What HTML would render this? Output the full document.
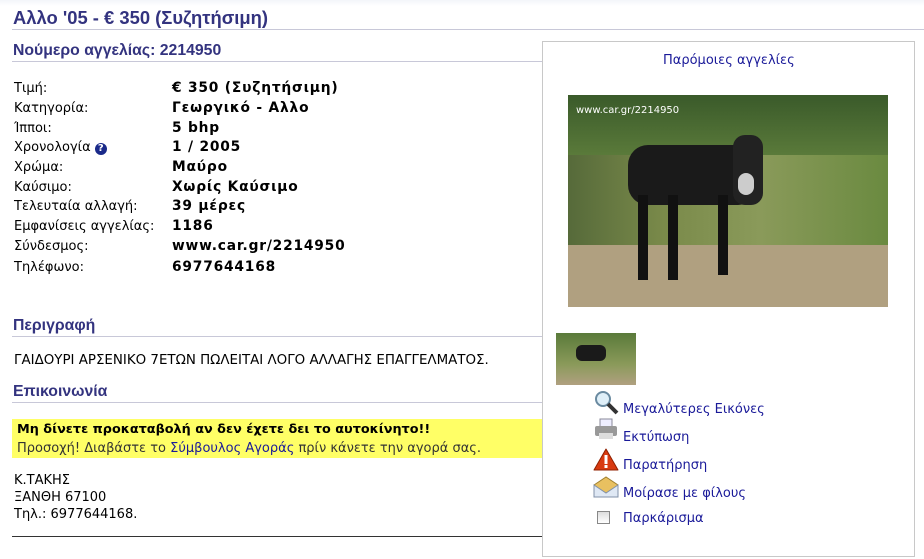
<!DOCTYPE html>
<html><head><meta charset="utf-8"><style>
body{margin:0;width:924px;height:559px;background:#fff;font-family:Verdana,"DejaVu Sans","Liberation Sans",sans-serif;font-size:13px;color:#000;position:relative;overflow:hidden}
.a{position:absolute;white-space:nowrap}
h1,h2{margin:0;font-family:"Liberation Sans",Arial,sans-serif;font-weight:bold;color:#33337f;position:absolute}
h1{font-size:18.4px;left:13px;top:7px}
h2{font-size:15.8px;left:13px}
.hl{position:absolute;height:1px;background:#c8c8d8}
.lab{left:14px}.val{left:172px;font-weight:bold;letter-spacing:0.8px;font-size:13.8px}
.lk{color:#1a1a99}
</style></head><body>
<div class="a" style="left:0;top:0;width:924px;height:6px;background:linear-gradient(#f3f5f9,#fff)"></div>
<h1>Αλλο '05 - € 350 (Συζητήσιμη)</h1>
<div class="hl" style="left:12px;top:29px;width:912px"></div>
<h2 style="top:42px">Νούμερο αγγελίας: 2214950</h2>
<div class="hl" style="left:12px;top:61px;width:530px"></div>
<div class="a lab" style="top:81px">Τιμή:</div><div class="a val" style="top:80px">€ 350 (Συζητήσιμη)</div>
<div class="a lab" style="top:101px">Κατηγορία:</div><div class="a val" style="top:100px">Γεωργικό - Αλλο</div>
<div class="a lab" style="top:121px">Ίπποι:</div><div class="a val" style="top:120px">5 bhp</div>
<div class="a lab" style="top:140px">Χρονολογία <span style="display:inline-block;width:12px;height:12px;border-radius:6px;background:#1a2a8a;color:#fff;font-size:10px;text-align:center;line-height:12px;font-weight:bold">?</span></div><div class="a val" style="top:139px">1 / 2005</div>
<div class="a lab" style="top:160px">Χρώμα:</div><div class="a val" style="top:159px">Μαύρο</div>
<div class="a lab" style="top:180px">Καύσιμο:</div><div class="a val" style="top:179px">Χωρίς Καύσιμο</div>
<div class="a lab" style="top:199px">Τελευταία αλλαγή:</div><div class="a val" style="top:198px">39 μέρες</div>
<div class="a lab" style="top:219px">Εμφανίσεις αγγελίας:</div><div class="a val" style="top:218px">1186</div>
<div class="a lab" style="top:239px">Σύνδεσμος:</div><div class="a val" style="top:238px">www.car.gr/2214950</div>
<div class="a lab" style="top:260px">Τηλέφωνο:</div><div class="a val" style="top:259px">6977644168</div>
<h2 style="top:317px">Περιγραφή</h2>
<div class="hl" style="left:12px;top:336px;width:530px"></div>
<div class="a" style="left:14px;top:353px;font-size:13.4px">ΓΑΙΔΟΥΡΙ ΑΡΣΕΝΙΚΟ 7ΕΤΩΝ ΠΩΛΕΙΤΑΙ ΛΟΓΟ ΑΛΛΑΓΗΣ ΕΠΑΓΓΕΛΜΑΤΟΣ.</div>
<h2 style="top:383px">Επικοινωνία</h2>
<div class="hl" style="left:12px;top:402px;width:530px"></div>
<div class="a" style="left:12px;top:419px;width:530px;height:39px;background:#ffff66"></div>
<div class="a" style="left:17px;top:422px;font-weight:bold;font-size:12.8px">Μη δίνετε προκαταβολή αν δεν έχετε δει το αυτοκίνητο!!</div>
<div class="a" style="left:17px;top:441px;color:#333">Προσοχή! Διαβάστε το <span class="lk">Σύμβουλος Αγοράς</span> πρίν κάνετε την αγορά σας.</div>
<div class="a" style="left:14px;top:473px">Κ.ΤΑΚΗΣ</div>
<div class="a" style="left:14px;top:490px">ΞΑΝΘΗ 67100</div>
<div class="a" style="left:14px;top:507px">Τηλ.: 6977644168.</div>
<div class="a" style="left:12px;top:536px;width:530px;height:1px;background:#333"></div>

<div class="a" style="left:542px;top:41px;width:371px;height:514px;border:1px solid #c8c8c8"></div>
<div class="a lk" style="left:663px;top:53px">Παρόμοιες αγγελίες</div>
<div class="a" style="left:568px;top:95px;width:320px;height:212px;background:linear-gradient(90deg,#566a3a 0%,#7a8a4a 30%,#8a9a5a 60%,#6a8a40 100%)">
<div class="a" style="left:0;top:0;width:320px;height:60px;background:linear-gradient(#3a5a2a,#5a7a3a)"></div>
<div class="a" style="left:0;top:150px;width:320px;height:62px;background:#b0a080"></div>
<div class="a" style="left:60px;top:50px;width:130px;height:60px;background:#1a1a1a;border-radius:20px"></div>
<div class="a" style="left:165px;top:40px;width:30px;height:70px;background:#222;border-radius:12px"></div>
<div class="a" style="left:70px;top:100px;width:10px;height:85px;background:#111"></div>
<div class="a" style="left:100px;top:100px;width:10px;height:85px;background:#111"></div>
<div class="a" style="left:150px;top:100px;width:10px;height:80px;background:#111"></div>
<div class="a" style="left:170px;top:78px;width:16px;height:22px;background:#ccc;border-radius:8px"></div>
<div class="a" style="left:8px;top:10px;color:#fff;font-size:10px">www.car.gr/2214950</div>
</div>
<div class="a" style="left:556px;top:333px;width:80px;height:52px;background:linear-gradient(#5a7a3a,#8a9a5a 60%,#b0a080)"><div class="a" style="left:20px;top:12px;width:30px;height:16px;background:#1a1a1a;border-radius:6px"></div></div>

<svg class="a" style="left:594px;top:390px" width="26" height="26"><circle cx="9" cy="9" r="7" fill="#dfeff8" stroke="#6a8aa0" stroke-width="2"/><path d="M14 14l9 9" stroke="#333" stroke-width="4"/></svg>
<div class="a lk" style="left:623px;top:402px">Μεγαλύτερες Εικόνες</div>
<svg class="a" style="left:594px;top:418px" width="26" height="24"><rect x="6" y="1" width="12" height="8" fill="#eef" stroke="#889"/><rect x="1" y="8" width="22" height="10" rx="2" fill="#999"/><rect x="5" y="15" width="14" height="6" fill="#ddd"/></svg>
<div class="a lk" style="left:623px;top:430px">Εκτύπωση</div>
<svg class="a" style="left:593px;top:448px" width="26" height="24"><path d="M13 1L25 22H1Z" fill="#d83a10" stroke="#902000" stroke-linejoin="round"/><rect x="11.5" y="7" width="3" height="9" fill="#fff"/><rect x="11.5" y="17" width="3" height="3" fill="#fff"/></svg>
<div class="a lk" style="left:623px;top:458px">Παρατήρηση</div>
<svg class="a" style="left:593px;top:475px" width="26" height="24"><path d="M1 10L13 2 25 10V22H1Z" fill="#e8c060" stroke="#a08030"/><path d="M1 10L13 18 25 10V22H1Z" fill="#dfe8f4" stroke="#8090a8"/></svg>
<div class="a lk" style="left:623px;top:486px">Μοίρασε με φίλους</div>
<div class="a" style="left:597px;top:511px;width:11px;height:11px;border:1px solid #888;background:linear-gradient(#ddd,#fff)"></div>
<div class="a lk" style="left:623px;top:511px">Παρκάρισμα</div>
</body></html>
